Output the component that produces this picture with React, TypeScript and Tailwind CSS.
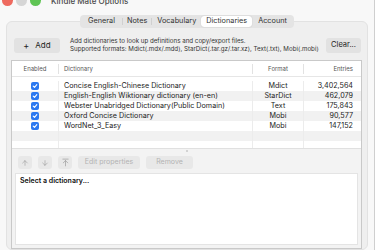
import React from "react";
import { ArrowUp, ArrowDown, ArrowUpToLine } from "lucide-react";

const font = { fontFamily: "Inter, 'Noto Sans', 'Liberation Sans', sans-serif" };

const rows = [
  { name: "Concise English-Chinese Dictionary", fmt: "Mdict", n: "3,402,564" },
  { name: "English-English Wiktionary dictionary (en-en)", fmt: "StarDict", n: "462,079" },
  { name: "Webster Unabridged Dictionary(Public Domain)", fmt: "Text", n: "175,843" },
  { name: "Oxford Concise Dictionary", fmt: "Mobi", n: "90,577" },
  { name: "WordNet_3_Easy", fmt: "Mobi", n: "147,152" },
  null,
  null,
];

function Check() {
  return (
    <div className="w-[8px] h-[8px] rounded-[2px] bg-[#2a78f0] flex items-center justify-center">
      <svg width="6" height="6" viewBox="0 0 10 10">
        <path d="M2 5.2 L4.2 7.4 L8 2.8" fill="none" stroke="white" strokeWidth="1.8" strokeLinecap="round" strokeLinejoin="round" />
      </svg>
    </div>
  );
}

export default function App() {
  return (
    <div className="w-[375px] h-[250px] overflow-hidden bg-[#f8f8f8] border-r border-[#cfcfcf] flex flex-col text-[#222]" style={font}>
      {/* title bar */}
      <div className="h-[12px] -mt-[6px] flex items-center relative shrink-0">
        <div className="flex items-center gap-[3px] pl-[2px]">
          <div className="w-[11px] h-[11px] rounded-full bg-[#ee6a5f]" />
          <div className="w-[11px] h-[11px] rounded-full bg-[#d6d6d6]" />
          <div className="w-[11px] h-[11px] rounded-full bg-[#5fc454]" />
        </div>
        <div className="ml-[10px] mt-[1px] text-[8px] text-[#4a4a4a] font-medium">Kindle Mate Options</div>
      </div>

      {/* panel */}
      <div className="mt-[15px] mx-[6px] flex-1 rounded-[6px] border border-[#e2e2e2] bg-[#efefef] flex flex-col">
        {/* tabs */}
        <div className="-mt-[7px] flex justify-center">
          <div className="h-[13px] flex items-center rounded-[4px] bg-[#e4e4e4] px-[1px] text-[7.3px] text-[#333]">
            <div className="px-[7px]">General</div>
            <div className="w-px h-[7px] bg-[#d0d0d0]" />
            <div className="px-[4px]">Notes</div>
            <div className="w-px h-[7px] bg-[#d0d0d0]" />
            <div className="px-[5px]">Vocabulary</div>
            <div className="h-[11px] flex items-center px-[5px] bg-white rounded-[3px] shadow-[0_0_1px_rgba(0,0,0,0.25)]">Dictionaries</div>
            <div className="px-[6px]">Account</div>
          </div>
        </div>

        {/* add row */}
        <div className="mt-[9px] flex items-center pl-[7px] pr-[6px]">
          <div className="w-[46px] h-[15px] rounded-[3px] bg-[#e2e2e2] flex items-center justify-center gap-[6px] text-[8px]">
            <span className="text-[9px] leading-none">+</span>
            <span>Add</span>
          </div>
          <div className="ml-[10px] flex-1 text-[6.2px] leading-[8px] text-[#333] whitespace-nowrap">
            <div>Add dictionaries to look up definitions and copy/export files.</div>
            <div>Supported formats: Mdict(.mdx/.mdd), StarDict(.tar.gz/.tar.xz), Text(.txt), Mobi(.mobi)</div>
          </div>
          <div className="w-[35px] h-[15px] rounded-[3px] bg-[#e2e2e2] flex items-center justify-center text-[7.5px]">Clear...</div>
        </div>

        {/* main box */}
        <div className="mt-[7px] ml-[4px] mr-[5px] flex-1 border border-[#c9c9c9] bg-[#f3f3f3] flex flex-col">
          {/* table */}
          <div className="h-[87px] bg-white flex flex-col overflow-hidden">
            <div className="h-[16px] grid grid-cols-[47px_194px_51px_1fr] items-center text-[6px] text-[#555] border-b border-[#e6e6e6] shrink-0">
              <div className="text-center border-r border-[#e2e2e2] h-[10px] leading-[10px]">Enabled</div>
              <div className="pl-[5px] border-r border-[#e2e2e2] h-[10px] leading-[10px]">Dictionary</div>
              <div className="text-center border-r border-[#e2e2e2] h-[10px] leading-[10px]">Format</div>
              <div className="text-right pr-[8px] h-[10px] leading-[10px]">Entries</div>
            </div>
            <div className="pt-[4px] flex flex-col">
              {rows.map((r, i) => (
                <div
                  key={i}
                  className={`h-[10px] grid grid-cols-[47px_194px_51px_1fr] items-stretch text-[7.2px] leading-[10px] ${i % 2 === 1 ? "bg-[#f1f1f1]" : "bg-white"}`}
                >
                  <div className="flex items-center justify-center border-r border-[#ececec]">{r && <Check />}</div>
                  <div className="pl-[5px] border-r border-[#ececec] whitespace-nowrap overflow-hidden">{r?.name}</div>
                  <div className="text-center border-r border-[#ececec]">{r?.fmt}</div>
                  <div className="text-right pr-[8px]">{r?.n}</div>
                </div>
              ))}
            </div>
          </div>
          {/* split handle */}
          <div className="h-[5px] flex items-center justify-center border-t border-[#e0e0e0]">
            <div className="w-[2px] h-[2px] rounded-full bg-[#c8c8c8]" />
          </div>
          {/* toolbar */}
          <div className="h-[19px] flex items-center pl-[6px] gap-[6px] text-[7px] text-[#b3b3b3]">
            <div className="w-[14px] h-[13px] rounded-[3px] bg-[#e8e8e8] flex items-center justify-center">
              <ArrowUp size={8} strokeWidth={1.5} color="#8a8a8a" />
            </div>
            <div className="w-[14px] h-[13px] rounded-[3px] bg-[#e8e8e8] flex items-center justify-center">
              <ArrowDown size={8} strokeWidth={1.5} color="#8a8a8a" />
            </div>
            <div className="w-[14px] h-[13px] rounded-[3px] bg-[#e8e8e8] flex items-center justify-center">
              <ArrowUpToLine size={9} strokeWidth={1.5} color="#8a8a8a" />
            </div>
            <div className="h-[13px] w-[62px] rounded-[3px] bg-[#e8e8e8] flex items-center justify-center">Edit properties</div>
            <div className="h-[13px] w-[47px] rounded-[3px] bg-[#e8e8e8] flex items-center justify-center">Remove</div>
          </div>
          {/* text area */}
          <div className="mt-[1px] mx-[3px] mb-[3px] flex-1 bg-white border border-[#e4e4e4] pl-[4px] pt-[2px]">
            <div className="text-[7px] font-semibold text-[#111]">Select a dictionary...</div>
          </div>
        </div>
      </div>
    </div>
  );
}
